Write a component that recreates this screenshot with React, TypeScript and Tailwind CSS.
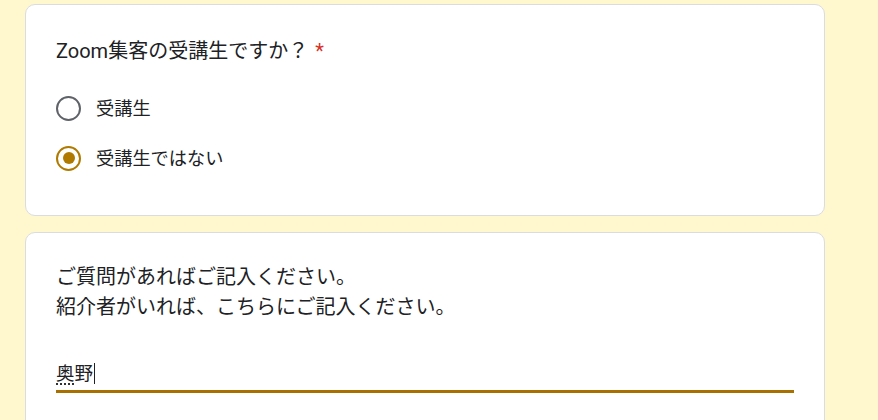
export default function App() {
  const options = [
    { label: "受講生", checked: false },
    { label: "受講生ではない", checked: true },
  ];

  return (
    <div
      className="h-[420px] w-[878px] overflow-hidden bg-[#fff7cd] pl-[25px] pt-[4px] text-[#202124]"
      style={{ fontFamily: 'Roboto, "Noto Sans CJK JP", sans-serif' }}
    >
      {/* Question card: radio */}
      <div className="w-[800px] rounded-[10px] border border-[#dadce0] bg-white px-[30px] pt-[31px] pb-[32px]">
        <div className="text-[20px] leading-[30px]">
          Zoom集客の受講生ですか？
          <span className="ml-[7px] text-[#d93025]">*</span>
        </div>
        <div className="mt-[17px] flex flex-col">
          {options.map((o) => (
            <div key={o.label} className="flex h-[50px] items-center gap-[15px]">
              <div
                className={
                  o.checked
                    ? "flex h-[25px] w-[25px] items-center justify-center rounded-full border-[2.5px] border-[#b07a00]"
                    : "flex h-[25px] w-[25px] items-center justify-center rounded-full border-[2.5px] border-[#5f6368]"
                }
              >
                {o.checked && <div className="h-[12px] w-[12px] rounded-full bg-[#b07a00]" />}
              </div>
              <span className="text-[18.2px] leading-[25px]">{o.label}</span>
            </div>
          ))}
        </div>
      </div>

      {/* Question card: text input */}
      <div className="mt-[16px] h-[240px] w-[800px] rounded-[10px] border border-[#dadce0] bg-white px-[30px] pt-[29px]">
        <div className="text-[20px] leading-[30px]">
          <div>ご質問があればご記入ください。</div>
          <div>紹介者がいれば、こちらにご記入ください。</div>
        </div>
        <div className="mt-[37px] border-b-[3px] border-[#a87000] text-[18.5px] leading-[31px]">
          <span className="underline decoration-dotted decoration-[#202124] underline-offset-[4px]">奥</span>
          <span>野</span>
          <span className="ml-[1px] inline-block h-[21px] w-[1px] translate-y-[4px] bg-[#202124]" />
        </div>
      </div>
    </div>
  );
}
